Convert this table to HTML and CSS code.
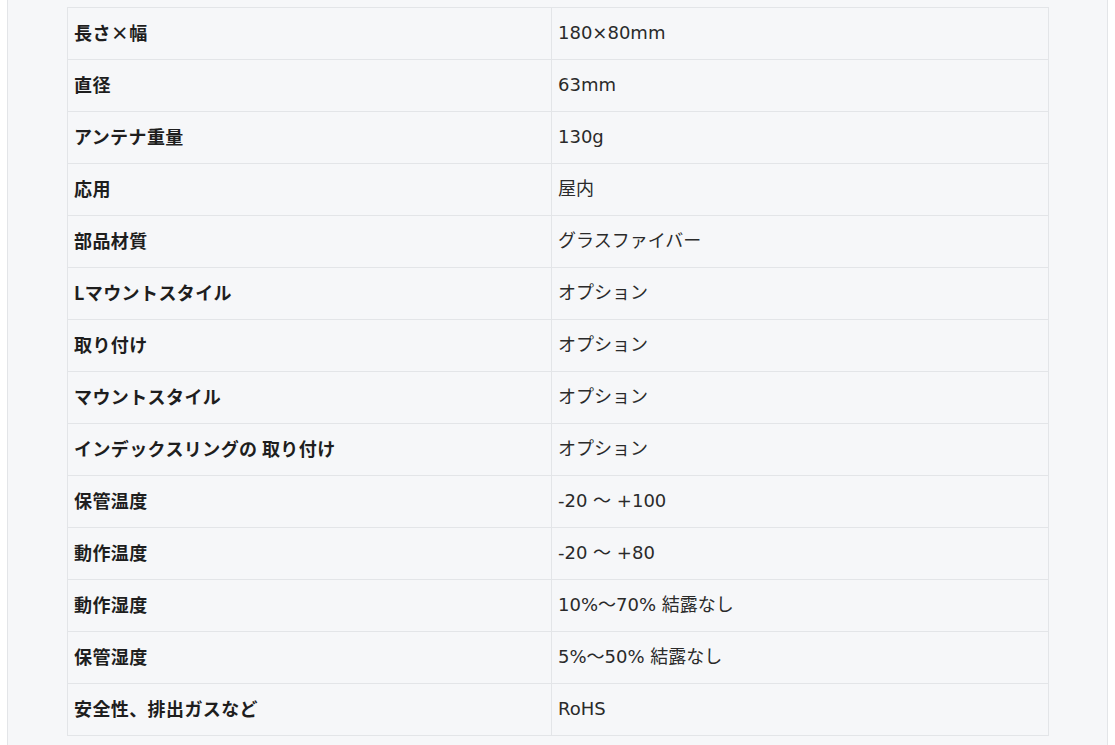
FILE: index.html
```html
<!DOCTYPE html>
<html lang="ja">
<head>
<meta charset="utf-8">
<title>仕様</title>
<link rel="stylesheet" href="styles.css">
</head>
<body>
<div class="wrap">
  <table class="spec">
    <tbody>
      <tr><th>長さ×幅</th><td>180×80mm</td></tr>
      <tr><th>直径</th><td>63mm</td></tr>
      <tr><th>アンテナ重量</th><td>130g</td></tr>
      <tr><th>応用</th><td>屋内</td></tr>
      <tr><th>部品材質</th><td>グラスファイバー</td></tr>
      <tr><th>Lマウントスタイル</th><td>オプション</td></tr>
      <tr><th>取り付け</th><td>オプション</td></tr>
      <tr><th>マウントスタイル</th><td>オプション</td></tr>
      <tr><th>インデックスリングの 取り付け</th><td>オプション</td></tr>
      <tr><th>保管温度</th><td>-20 ～ +100</td></tr>
      <tr><th>動作温度</th><td>-20 ～ +80</td></tr>
      <tr><th>動作湿度</th><td>10%～70% 結露なし</td></tr>
      <tr><th>保管湿度</th><td>5%～50% 結露なし</td></tr>
      <tr><th>安全性、排出ガスなど</th><td>RoHS</td></tr>
    </tbody>
  </table>
</div>
</body>
</html>
```
FILE: styles.css
```css
html, body {
  margin: 0;
  padding: 0;
  background: #ffffff;
}
body {
  font-family: "DejaVu Sans", "Noto Sans CJK JP", sans-serif;
  font-size: 18px;
  color: #222;
}
.wrap {
  margin: 0 7px;
  min-height: 100vh;
  box-sizing: border-box;
  padding: 7px 58px 20px 59px;
  background: #f6f7f9;
  border-left: 1px solid #e3e5e8;
  border-right: 1px solid #e3e5e8;
}
.spec {
  width: 982px;
  border-collapse: collapse;
  background: #f6f7f9;
}
.spec th, .spec td {
  border: 1px solid #e3e5e8;
  padding: 12px 6px 14px;
  line-height: 25px;
  text-align: left;
  vertical-align: middle;
}
.spec th {
  width: 471px;
  font-weight: bold;
  color: #1e1e1e;
  letter-spacing: 0.4px;
  font-family: "Noto Sans CJK JP", "DejaVu Sans", sans-serif;
}
.spec td {
  font-weight: normal;
  color: #2a2a2a;
}
```
